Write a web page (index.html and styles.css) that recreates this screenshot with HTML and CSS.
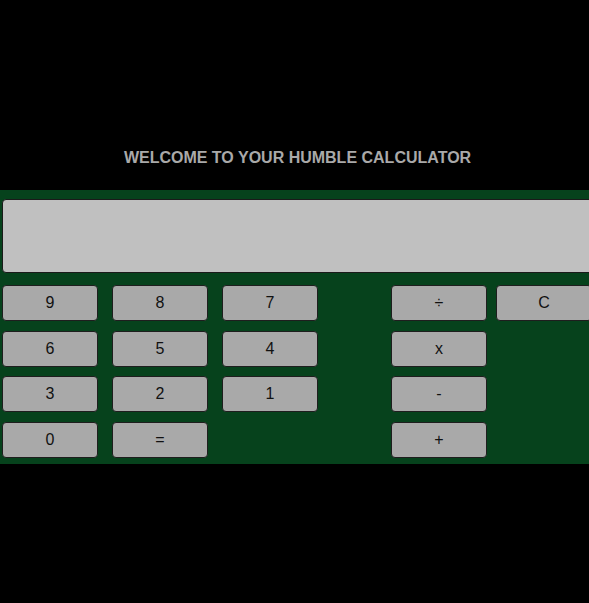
FILE: index.html
```html
<!DOCTYPE html>
<html>
<head>
<meta charset="utf-8">
<title>Humble Calculator</title>
<link rel="stylesheet" href="styles.css">
</head>
<body>
<header class="header">
  <h1 class="title">WELCOME TO YOUR HUMBLE CALCULATOR</h1>
</header>
<main class="calc">
  <div class="display"></div>
  <div class="keys">
    <button class="key">9</button>
    <button class="key">8</button>
    <button class="key">7</button>
    <button class="key">÷</button>
    <button class="key">C</button>

    <button class="key">6</button>
    <button class="key">5</button>
    <button class="key">4</button>
    <button class="key">x</button>
    <span class="blank"></span>

    <button class="key">3</button>
    <button class="key">2</button>
    <button class="key">1</button>
    <button class="key">-</button>
    <span class="blank"></span>

    <button class="key">0</button>
    <button class="key">=</button>
    <span class="blank"></span>
    <button class="key">+</button>
    <span class="blank"></span>
  </div>
</main>
</body>
</html>
```

FILE: styles.css
```css
html, body {
  margin: 0;
  padding: 0;
  background: #000;
  overflow: hidden;
}

body {
  font-family: "Liberation Sans", Arial, sans-serif;
}

.header {
  height: 190px;
  display: flex;
  align-items: flex-end;
  justify-content: center;
  padding: 0 0 23px 6px;
  box-sizing: border-box;
}

.title {
  margin: 0;
  font-size: 16px;
  line-height: 18px;
  font-weight: bold;
  color: #a9a9a9;
}

.calc {
  background: #06421c;
  width: 100%;
  overflow: hidden;
  padding: 9px 0 6px 2px;
  box-sizing: border-box;
}

.display {
  height: 74px;
  width: 620px;
  background: #c0c0c0;
  border: 1px solid #1a1a1a;
  border-radius: 4px;
  box-sizing: border-box;
  margin-bottom: 12px;
}

.keys {
  display: grid;
  grid-template-columns: 110px 110px 169px 105px 95px;
  grid-auto-rows: 36px;
  row-gap: 9.5px;
  justify-items: start;
}

.key {
  width: 96px;
  height: 36px;
  background: #a9a9a9;
  border: 1px solid #1e1e1e;
  border-radius: 4px;
  font-family: "Liberation Sans", Arial, sans-serif;
  font-size: 16px;
  color: #111;
  padding: 0;
  margin: 0;
}
```
